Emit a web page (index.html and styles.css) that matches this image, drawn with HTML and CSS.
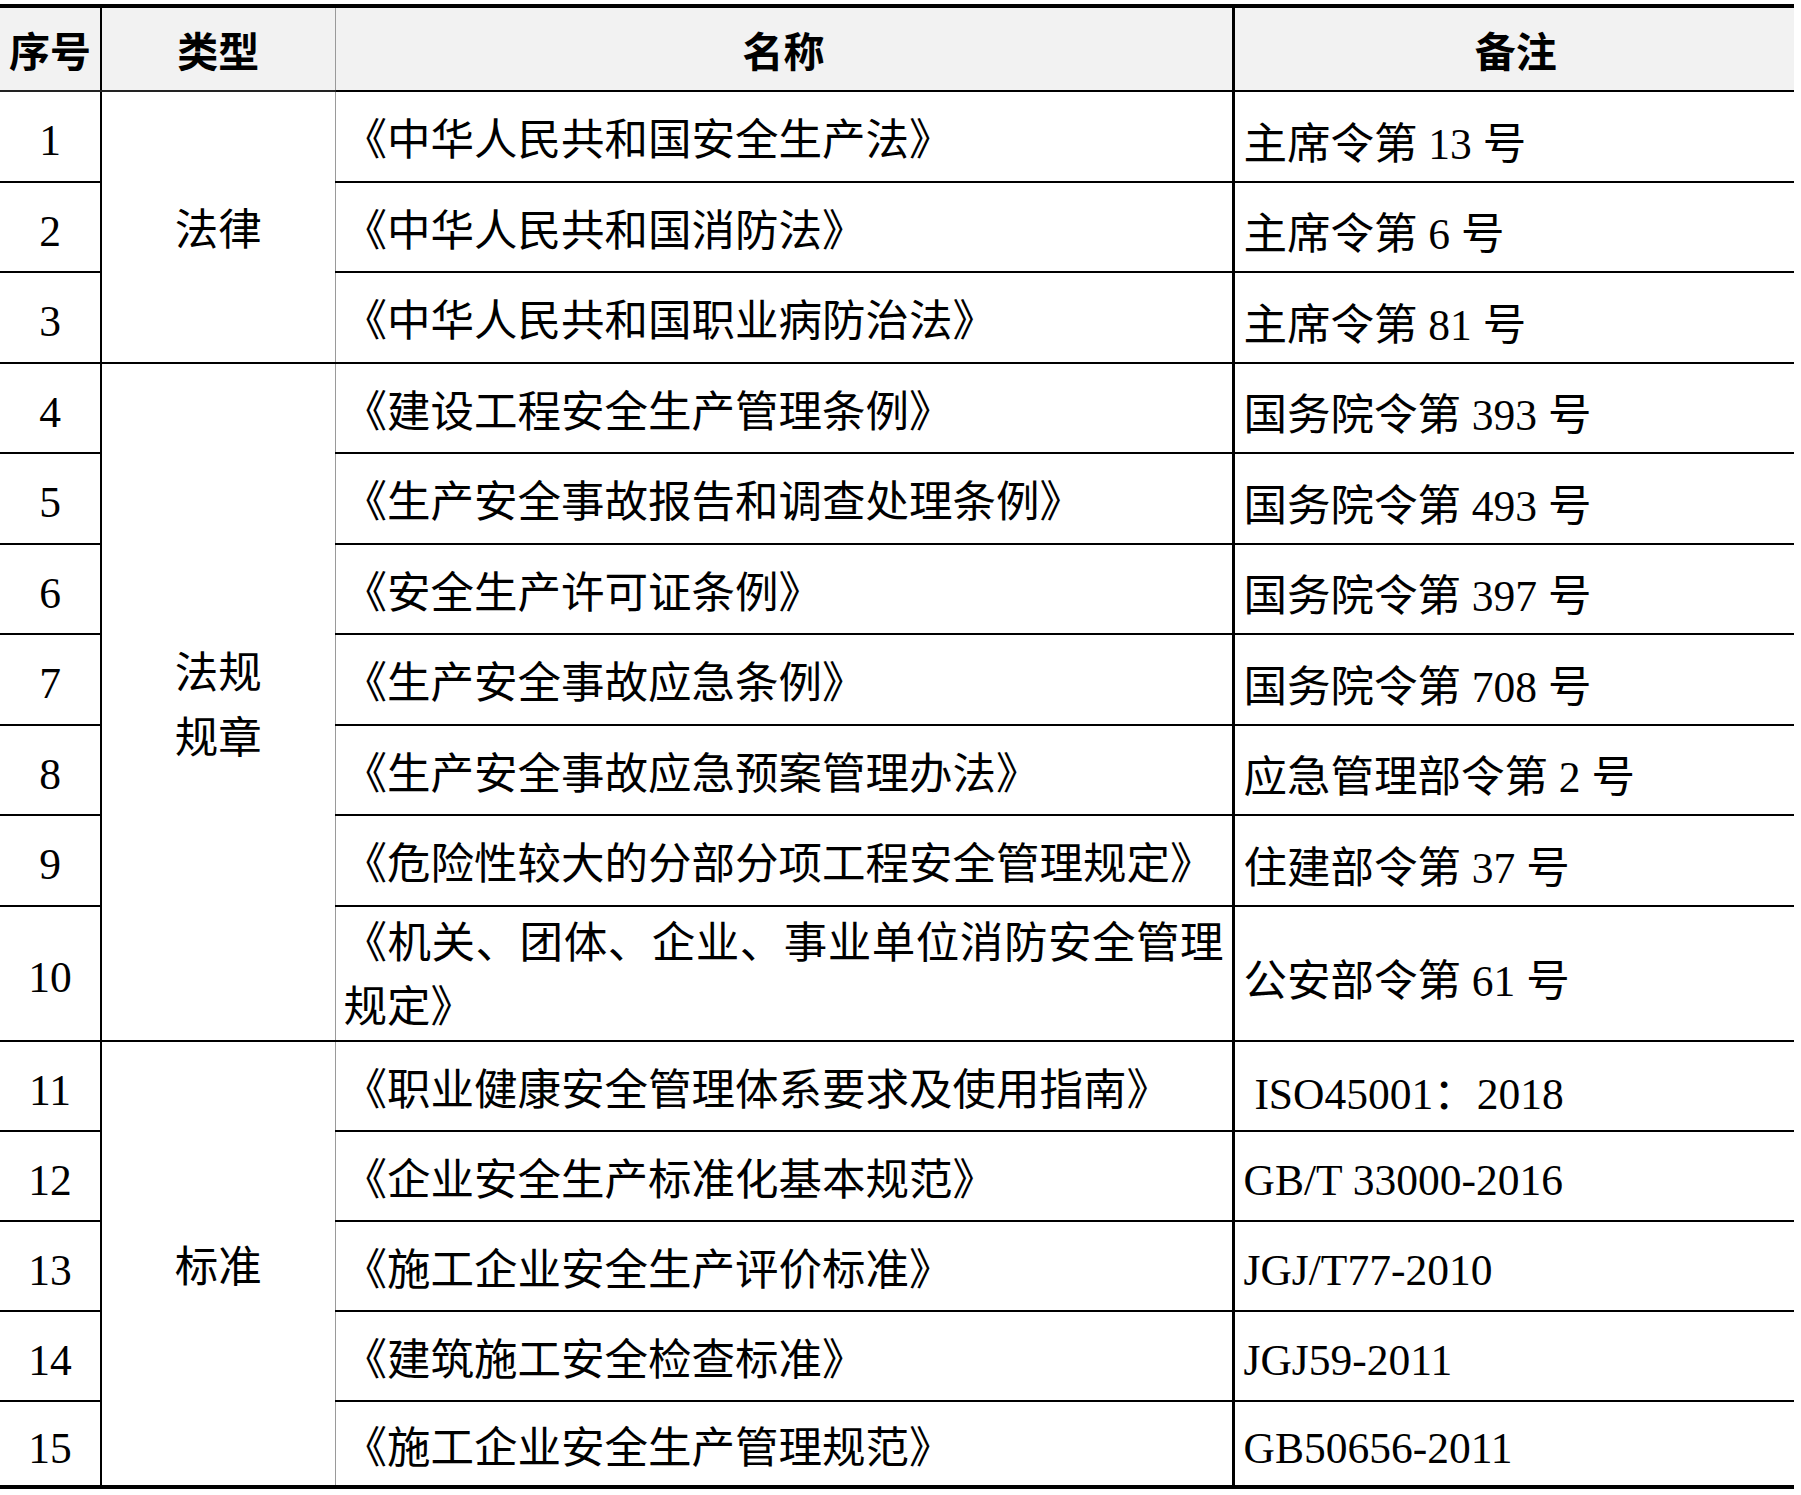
FILE: index.html
```html
<!DOCTYPE html>
<html lang="zh-CN">
<head>
<meta charset="utf-8">
<title>安全生产法律法规及标准清单</title>
<link rel="stylesheet" href="styles.css">
</head>
<body>
<table class="law-table">
  <colgroup>
    <col class="c-no">
    <col class="c-type">
    <col class="c-name">
    <col class="c-note">
  </colgroup>
  <thead>
    <tr class="head-row">
      <th class="no">序号</th>
      <th class="type">类型</th>
      <th class="name">名称</th>
      <th class="note">备注</th>
    </tr>
  </thead>
  <tbody>
    <tr class="row">
      <td class="no">1</td>
      <td class="type" rowspan="3">法律</td>
      <td class="name">《中华人民共和国安全生产法》</td>
      <td class="note">主席令第 13 号</td>
    </tr>
    <tr class="row">
      <td class="no">2</td>
      <td class="name">《中华人民共和国消防法》</td>
      <td class="note">主席令第 6 号</td>
    </tr>
    <tr class="row">
      <td class="no">3</td>
      <td class="name">《中华人民共和国职业病防治法》</td>
      <td class="note">主席令第 81 号</td>
    </tr>
    <tr class="row">
      <td class="no">4</td>
      <td class="type" rowspan="7">法规<br>规章</td>
      <td class="name">《建设工程安全生产管理条例》</td>
      <td class="note">国务院令第 393 号</td>
    </tr>
    <tr class="row">
      <td class="no">5</td>
      <td class="name">《生产安全事故报告和调查处理条例》</td>
      <td class="note">国务院令第 493 号</td>
    </tr>
    <tr class="row">
      <td class="no">6</td>
      <td class="name">《安全生产许可证条例》</td>
      <td class="note">国务院令第 397 号</td>
    </tr>
    <tr class="row">
      <td class="no">7</td>
      <td class="name">《生产安全事故应急条例》</td>
      <td class="note">国务院令第 708 号</td>
    </tr>
    <tr class="row">
      <td class="no">8</td>
      <td class="name">《生产安全事故应急预案管理办法》</td>
      <td class="note">应急管理部令第 2 号</td>
    </tr>
    <tr class="row">
      <td class="no">9</td>
      <td class="name">《危险性较大的分部分项工程安全管理规定》</td>
      <td class="note">住建部令第 37 号</td>
    </tr>
    <tr class="row row-tall">
      <td class="no">10</td>
      <td class="name">《机关、团体、企业、事业单位消防安全管理规定》</td>
      <td class="note">公安部令第 61 号</td>
    </tr>
    <tr class="row row-b">
      <td class="no">11</td>
      <td class="type" rowspan="5">标准</td>
      <td class="name">《职业健康安全管理体系要求及使用指南》</td>
      <td class="note">&nbsp;ISO45001：2018</td>
    </tr>
    <tr class="row row-b">
      <td class="no">12</td>
      <td class="name">《企业安全生产标准化基本规范》</td>
      <td class="note">GB/T 33000-2016</td>
    </tr>
    <tr class="row row-b">
      <td class="no">13</td>
      <td class="name">《施工企业安全生产评价标准》</td>
      <td class="note">JGJ/T77-2010</td>
    </tr>
    <tr class="row row-b">
      <td class="no">14</td>
      <td class="name">《建筑施工安全检查标准》</td>
      <td class="note">JGJ59-2011</td>
    </tr>
    <tr class="row row-last">
      <td class="no">15</td>
      <td class="name">《施工企业安全生产管理规范》</td>
      <td class="note">GB50656-2011</td>
    </tr>
  </tbody>
</table>
</body>
</html>
```

FILE: styles.css
```css
html, body {
  margin: 0;
  padding: 0;
  background: #ffffff;
}

body {
  padding-top: 4px;
  font-family: "Liberation Serif", "Noto Sans CJK SC", serif;
  color: #000;
}

.law-table {
  width: 1794px;
  table-layout: fixed;
  border-collapse: collapse;
  border-top: 4px solid #000;
  border-bottom: 4px solid #000;
  font-size: 43.5px;
}

.c-no { width: 101px; }
.c-type { width: 234px; }
.c-name { width: 898px; }
.c-note { width: 561px; }

.law-table th,
.law-table td {
  padding: 0;
  vertical-align: middle;
  font-weight: 400;
}

.law-table td {
  padding-top: 8px;
}

.head-row {
  height: 85px;
  background: #f2f2f2;
}

.head-row th {
  font-family: "Noto Sans CJK SC", sans-serif;
  font-weight: 700;
  font-size: 41px;
  text-align: center;
  border-bottom: 2px solid #222;
}

.row { height: 90.5px; }
.row-tall { height: 135.5px; }
.row-b { height: 90px; }
.row-last { height: 86px; }

.no {
  text-align: center;
  border-right: 2px solid #000;
  border-bottom: 2px solid #000;
}

.type {
  text-align: center;
  line-height: 65px;
  border-right: 1px solid #9a9a9a;
  border-bottom: 2px solid #000;
}

.law-table .name {
  text-align: justify;
  padding-left: 8px;
  padding-right: 8px;
  line-height: 66px;
  border-right: 3px solid #000;
  border-bottom: 2px solid #000;
}

.law-table .row-tall .name {
  padding-top: 3px;
  line-height: 64px;
}

.head-row .name {
  text-align: center;
}

.law-table .note {
  text-align: left;
  padding-left: 9px;
  padding-right: 6px;
  border-bottom: 2px solid #000;
  white-space: nowrap;
}

.head-row .note {
  text-align: center;
}
```
